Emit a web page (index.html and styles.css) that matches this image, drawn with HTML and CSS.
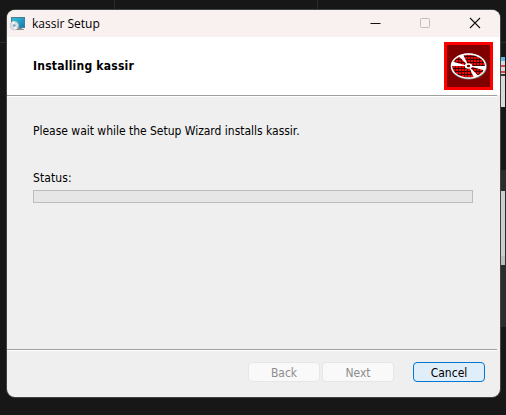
FILE: index.html
```html
<!DOCTYPE html>
<html lang="en">
<head>
<meta charset="utf-8">
<title>kassir Setup</title>
<link rel="stylesheet" href="styles.css">
</head>
<body>
<svg class="backdrop" width="506" height="415" viewBox="0 0 506 415" shape-rendering="crispEdges" aria-hidden="true">
  <path fill="#171717" d="M0 0h506v415H0z"/>
  <path fill="#2b2b2b" d="M114 0h1v12h-1zM317 0h1v12h-1zM0 42h8v1H0zM499 42h7v1h-7z"/>
  <path fill="#888" d="M83 9h4v1h-4z"/>
  <path fill="#639bba" d="M338 9h8v1h-8z"/>
  <path fill="#d9d9db" d="M500 57h5v50h-5z"/>
  <path fill="#5db5e0" d="M500 57h5v4h-5z"/>
  <path fill="#d94545" d="M501 65h4v2h-4zM501 71h4v2h-4z"/>
  <path fill="#333" d="M500 74h5v2h-5z"/>
  <path fill="#2c2c2c" d="M500 170h6v157h-6z"/>
  <path fill="#cfcdcf" d="M500 191h5v65h-5z"/>
  <path fill="#bdbdbd" d="M500 256h5v9h-5z"/>
</svg>
<main class="window">
  <header class="titlebar">
    <svg class="app-icon" width="16" height="16" viewBox="0 0 16 16">
      <defs><linearGradient id="screen" x2="1" y2="1"><stop stop-color="#36bfd5"/><stop offset="1" stop-color="#167db5"/></linearGradient></defs>
      <path fill="#8b8f92" d="M7 11h5v2H7zM5 13h9v1H5z"/>
      <path fill="#477f98" d="M1 1h14v11H1z"/>
      <path fill="url(#screen)" d="M2 2h12v9H2z"/>
      <circle cx="4.3" cy="9.5" r="4.3" fill="#d9dfe5" stroke="#aeb9c2" stroke-width=".6"/>
      <path fill="#f8fafb" d="M4.3 9.5 1.5 6.3l2.8-1zM4.3 9.5l3 3-3 1.2z"/>
      <circle cx="4.3" cy="9.5" r="1.3" fill="#7ba3bb"/>
    </svg>
    <span class="title">kassir Setup</span>
    <div class="controls">
      <svg width="10" height="10" viewBox="0 0 10 10"><path d="M.5 5.5h10" stroke="#111"/></svg>
      <svg width="10" height="10" viewBox="0 0 10 10"><rect x=".5" y=".5" width="9" height="9" rx="1" fill="none" stroke="#c4bdbd"/></svg>
      <svg width="10" height="10" viewBox="0 0 10 10"><path d="m0 0 10 10M10 0 0 10" stroke="#111" stroke-width="1.1"/></svg>
    </div>
  </header>
  <section class="banner">
    <h1>Installing kassir</h1>
    <svg class="disc" width="49" height="48" viewBox="0 0 49 48">
      <defs>
        <pattern id="dots" width="3" height="3" patternUnits="userSpaceOnUse"><path fill="#400" d="M0 0h3v3H0z"/><path fill="#f00" d="M0 0h2v2H0z"/></pattern>
      </defs>
      <path fill="#f00" d="M0 0h49v48H0z"/>
      <path fill="#800000" d="M3 3h43v42H3z"/>
      <ellipse cx="24.8" cy="24.4" rx="17.4" ry="12.3" fill="url(#dots)" stroke="#808080" stroke-width="1.6"/>
      <ellipse cx="24.5" cy="24" rx="17" ry="12" fill="none" stroke="#fff" stroke-width="1.3"/>
      <path fill="#fff" d="m14.500 14 4.500-1.800 5.500 11.800zM8 19.500l16.500 4.500-17 0zM34.500 34 30 35.800 24.500 24zM41 28.500 24.500 24h17z"/>
      <ellipse cx="24.5" cy="24" rx="3.8" ry="2.7" fill="#fff"/>
      <ellipse cx="24.5" cy="24" rx="1.7" ry="1.3" fill="#800000"/>
    </svg>
  </section>
  <section class="content">
    <p class="message">Please wait while the Setup Wizard installs kassir.</p>
    <p class="status">Status:</p>
    <div class="progress"></div>
  </section>
  <footer class="actions">
    <button class="back" disabled>Back</button>
    <button class="next" disabled>Next</button>
    <button class="cancel">Cancel</button>
  </footer>
</main>
</body>
</html>
```
FILE: styles.css
```css
* { box-sizing: border-box; }
body {
  margin: 0;
  width: 506px;
  height: 415px;
  padding: 10px 0 0 7px;
  overflow: hidden;
  background: #171717;
  font: 12px/16px "DejaVu Sans Condensed", "DejaVu Sans", sans-serif;
  color: #000;
}
.backdrop { position: absolute; top: 0; left: 0; }
.window {
  position: relative;
  display: flex;
  flex-direction: column;
  width: 493px;
  height: 387px;
  overflow: hidden;
  border-radius: 8px;
  background: #efefef;
  box-shadow: 0 0 0 1px #414444;
}
.titlebar {
  display: flex;
  align-items: center;
  height: 27px;
  padding-left: 3px;
  background: #f9f0f0;
}
.title {
  margin-left: 6px;
  font: 12px/16px "Open Sans", sans-serif;
}
.controls { display: flex; gap: 40px; margin: 0 20px 1px auto; }
.controls svg { overflow: visible; }
.banner {
  display: flex;
  justify-content: space-between;
  height: 58px;
  padding: 5px 7px 0 26px;
  background: #fff;
}
h1 { margin: 16px 0 0; font-size: 12px; line-height: 16px; letter-spacing: .23px; }
.content {
  height: 254px;
  margin-right: 3px;
  padding: 27px 24px 0 26px;
  border-top: 1px solid #a0a0a0;
  box-shadow: inset 0 1px #fff;
}
.content p { margin: 0; }
.message { white-space: nowrap; letter-spacing: -.02px; }
.content .status { margin-top: 31px; letter-spacing: .1px; }
.progress { width: 440px; height: 13px; margin-top: 4px; border: 1px solid #bcbcbc; background: #e6e6e6; }
.actions {
  display: flex;
  height: 48px;
  margin-right: 3px;
  padding: 12px 12px 0 241px;
  border-top: 1px solid #a0a0a0;
  box-shadow: inset 0 1px #fff;
}
button {
  width: 72px;
  height: 20px;
  padding: 2px 0 0;
  border: 1px solid #e6e6e6;
  border-radius: 4px;
  background: #f9f9f9;
  color: #8d8d8d;
  font: inherit;
}
.next { margin-left: 2px; }
.cancel { margin-left: auto; border-color: #0078d4; background: #e0eef9; color: #000; }
```
